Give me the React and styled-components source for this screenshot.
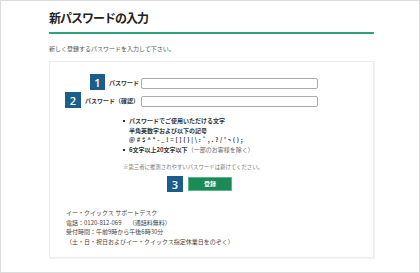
import React from "react";
import styled, { createGlobalStyle } from "styled-components";

const Global = createGlobalStyle`
  html, body { margin: 0; padding: 0; background: #fff; }
  body { font-family: "Noto Sans CJK JP", "Noto Sans", sans-serif; color: #333; }
`;

const Frame = styled.div`
  box-sizing: border-box;
  width: 420px;
  height: 273px;
  border: 1px solid #dcdcdc;
  padding: 10px 0 0 48px;
`;

const Content = styled.div`
  width: 325px;
`;

const Title = styled.h1`
  margin: 0;
  font-size: 12px;
  line-height: 14px;
  font-weight: 700;
  letter-spacing: -1px;
  color: #222;
  padding-bottom: 7px;
  border-bottom: 2px solid #2ba47e;
`;

const Lead = styled.p`
  margin: 11px 0 0 0;
  font-size: 6px;
  line-height: 8px;
  color: #555;
`;

const Card = styled.div`
  box-sizing: border-box;
  margin-top: 8px;
  height: 197px;
  border: 1px solid #ececec;
  box-shadow: 1px 1px 0 #f3f3f3;
  padding: 12px 0 0 0;
`;

const FormGrid = styled.div`
  display: grid;
  grid-template-columns: 89px 177px;
  column-gap: 2px;
  row-gap: 2px;
  align-items: center;
`;

const LabelCell = styled.div`
  display: flex;
  align-items: center;
  justify-content: flex-end;
  gap: 4px;
  height: 16px;
`;

const Badge = styled.span`
  display: inline-flex;
  align-items: center;
  justify-content: center;
  width: ${(p) => p.$w || 15}px;
  height: 16px;
  background: #1b5e8c;
  color: #fff;
  font-family: "Open Sans", "Liberation Sans", sans-serif;
  font-size: 11px;
  font-weight: 600;
  line-height: 1;
`;

const Label = styled.span`
  font-size: 6px;
  font-weight: 700;
  color: #333;
  white-space: nowrap;
`;

const Input = styled.input`
  box-sizing: border-box;
  width: 177px;
  height: 11px;
  margin-top: ${(p) => p.$mt || 0}px;
  border: 1px solid #aaa;
  border-radius: 2px;
  background: #fff;
  padding: 0;
  outline: none;
`;

const Rules = styled.ul`
  margin: 8px 0 0 73px;
  padding: 0;
  list-style: none;
  font-size: 6px;
  line-height: 9.5px;
  font-weight: 700;
  color: #333;
`;

const Rule = styled.li`
  position: relative;
  padding-left: 6px;
  &::before {
    content: "";
    position: absolute;
    left: 0;
    top: 4px;
    width: 2px;
    height: 2px;
    background: #333;
    display: ${(p) => (p.$bullet ? "block" : "none")};
  }
`;

const Symbols = styled.span`
  letter-spacing: 1.7px;
`;

const Aside = styled.span`
  font-weight: 400;
  color: #666;
`;

const Note = styled.p`
  margin: 9px 0 0 73px;
  font-size: 5.4px;
  line-height: 8px;
  color: #777;
`;

const Actions = styled.div`
  display: flex;
  align-items: center;
  gap: 5px;
  margin: 5px 0 0 117px;
`;

const Button = styled.button`
  box-sizing: border-box;
  width: 44px;
  height: 14px;
  border: 1px solid #5cb48b;
  background: #1a8a57;
  color: #fff;
  font-family: "Noto Sans CJK JP", sans-serif;
  font-size: 6px;
  font-weight: 700;
  padding: 0;
  line-height: 1;
`;

const Support = styled.div`
  margin: 16px 0 0 16px;
  font-size: 6px;
  line-height: 9.5px;
  color: #444;
`;

const Line = styled.div`
  white-space: pre;
`;

export default function App() {
  return (
    <>
      <Global />
      <Frame>
        <Content>
          <Title>新パスワードの入力</Title>
          <Lead>新しく登録するパスワードを入力して下さい。</Lead>
          <Card>
            <FormGrid>
              <LabelCell>
                <Badge>1</Badge>
                <Label>パスワード</Label>
              </LabelCell>
              <Input type="password" $mt={3} />
              <LabelCell>
                <Badge $w={16}>2</Badge>
                <Label>パスワード（確認）</Label>
              </LabelCell>
              <Input type="password" $mt={3} />
            </FormGrid>
            <Rules>
              <Rule $bullet>パスワードでご使用いただける文字</Rule>
              <Rule>半角英数字および以下の記号</Rule>
              <Rule>
                <Symbols>@#$^*-_!=[]{"{}"}|\:`,.?/'~();</Symbols>
              </Rule>
              <Rule $bullet>
                6文字以上20文字以下<Aside>（一部のお客様を除く）</Aside>
              </Rule>
            </Rules>
            <Note>※第三者に推測されやすいパスワードは避けてください。</Note>
            <Actions>
              <Badge $w={16}>3</Badge>
              <Button type="button">登録</Button>
            </Actions>
            <Support>
              <Line>イー・クイックス サポートデスク</Line>
              <Line>電話：0120-812-069　 （通話料無料）</Line>
              <Line>受付時間：午前9時から午後6時30分</Line>
              <Line>（土・日・祝日およびイー・クイックス指定休業日をのぞく）</Line>
            </Support>
          </Card>
        </Content>
      </Frame>
    </>
  );
}
